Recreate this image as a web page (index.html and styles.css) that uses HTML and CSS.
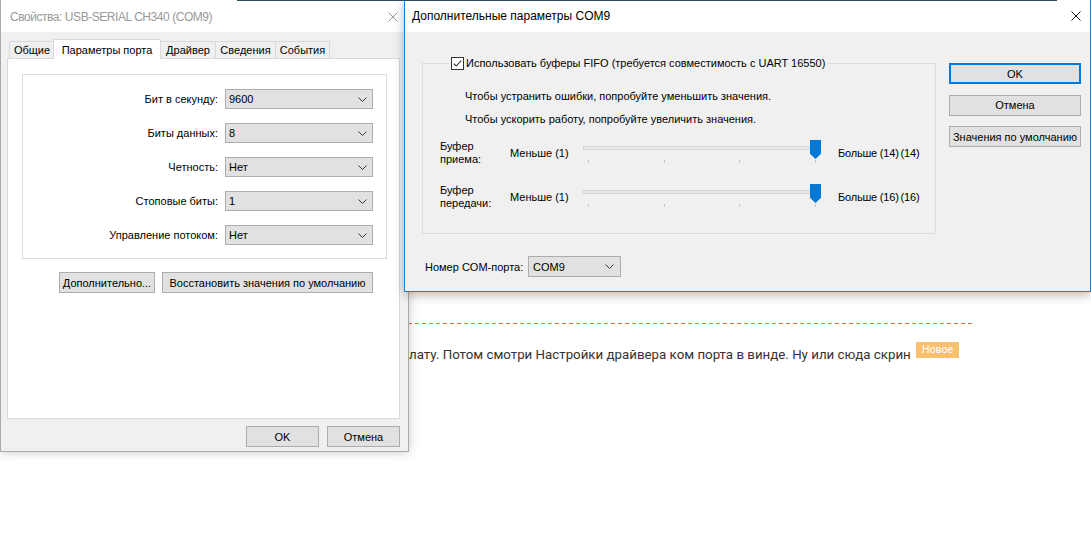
FILE: index.html
```html
<!DOCTYPE html>
<html lang="ru">
<head>
<meta charset="utf-8">
<title>COM9</title>
<link rel="stylesheet" href="styles.css">
</head>
<body>
<div class="desktop">
  <div class="page">
    <div class="dash"></div>
    <p class="post">лату. Потом смотри Настройки драйвера ком порта в винде. Ну или сюда скрин <span class="badge">Новое</span></p>
  </div>

  <div class="topstrip"></div>

  <section class="win props">
    <header class="titlebar inactive">
      <span class="title">Свойства: USB-SERIAL CH340 (COM9)</span>
      <svg class="close" width="10" height="10" viewBox="0 0 10 10"><path d="M0.5 0.5 L9.5 9.5 M9.5 0.5 L0.5 9.5" stroke="#9a9a9a" stroke-width="1" fill="none"/></svg>
    </header>
    <div class="props-body">
      <nav class="tabs">
        <span class="tab t1">Общие</span>
        <span class="tab t2 active">Параметры порта</span>
        <span class="tab t3">Драйвер</span>
        <span class="tab t4">Сведения</span>
        <span class="tab t5">События</span>
      </nav>
      <div class="panel">
        <div class="group">
          <div class="form">
            <label class="flabel">Бит в секунду:</label>
            <div class="select"><span>9600</span><svg class="chev" width="9" height="5" viewBox="0 0 9 5"><path d="M0.5 0.5 L4.5 4.5 L8.5 0.5" stroke="#333" fill="none"/></svg></div>
            <label class="flabel">Биты данных:</label>
            <div class="select"><span>8</span><svg class="chev" width="9" height="5" viewBox="0 0 9 5"><path d="M0.5 0.5 L4.5 4.5 L8.5 0.5" stroke="#333" fill="none"/></svg></div>
            <label class="flabel">Четность:</label>
            <div class="select"><span>Нет</span><svg class="chev" width="9" height="5" viewBox="0 0 9 5"><path d="M0.5 0.5 L4.5 4.5 L8.5 0.5" stroke="#333" fill="none"/></svg></div>
            <label class="flabel">Стоповые биты:</label>
            <div class="select"><span>1</span><svg class="chev" width="9" height="5" viewBox="0 0 9 5"><path d="M0.5 0.5 L4.5 4.5 L8.5 0.5" stroke="#333" fill="none"/></svg></div>
            <label class="flabel">Управление потоком:</label>
            <div class="select"><span>Нет</span><svg class="chev" width="9" height="5" viewBox="0 0 9 5"><path d="M0.5 0.5 L4.5 4.5 L8.5 0.5" stroke="#333" fill="none"/></svg></div>
          </div>
        </div>
        <div class="panel-actions">
          <button class="btn b-more">Дополнительно...</button>
          <button class="btn b-restore">Восстановить значения по умолчанию</button>
        </div>
      </div>
      <div class="footer">
        <button class="btn b-foot">OK</button>
        <button class="btn b-foot">Отмена</button>
      </div>
    </div>
  </section>

  <section class="win adv">
    <header class="titlebar">
      <span class="title">Дополнительные параметры COM9</span>
      <svg class="close" width="10" height="10" viewBox="0 0 10 10"><path d="M0.5 0.5 L9.5 9.5 M9.5 0.5 L0.5 9.5" stroke="#111" stroke-width="1" fill="none"/></svg>
    </header>
    <div class="adv-body">
      <div class="adv-main">
        <fieldset class="fifo">
          <legend class="fifo-legend">
            <svg class="checkbox" width="13" height="13" viewBox="0 0 13 13"><rect x="0.5" y="0.5" width="12" height="12" fill="#fff" stroke="#333"/><path d="M2.8 6.6 L5.2 9 L10.2 3.6" stroke="#333" stroke-width="1.1" fill="none"/></svg>
            <span>Использовать буферы FIFO (требуется совместимость с UART 16550)</span>
          </legend>
          <p class="hint h1">Чтобы устранить ошибки, попробуйте уменьшить значения.</p>
          <p class="hint h2">Чтобы ускорить работу, попробуйте увеличить значения.</p>
          <div class="srow r1">
            <div class="slabel">Буфер<br>приема:</div>
            <div class="smin">Меньше (1)</div>
            <div class="slider">
              <div class="track"></div>
              <div class="ticks"><i></i><i></i><i></i><i></i></div>
              <div class="thumb"></div>
            </div>
            <div class="smax"><span>Больше (14)</span><span class="cur">(14)</span></div>
          </div>
          <div class="srow r2">
            <div class="slabel">Буфер<br>передачи:</div>
            <div class="smin">Меньше (1)</div>
            <div class="slider">
              <div class="track"></div>
              <div class="ticks"><i></i><i></i><i></i><i></i></div>
              <div class="thumb"></div>
            </div>
            <div class="smax"><span>Больше (16)</span><span class="cur">(16)</span></div>
          </div>
        </fieldset>
        <div class="comrow">
          <span class="com-label">Номер COM-порта:</span>
          <div class="select com"><span>COM9</span><svg class="chev" width="9" height="5" viewBox="0 0 9 5"><path d="M0.5 0.5 L4.5 4.5 L8.5 0.5" stroke="#333" fill="none"/></svg></div>
        </div>
      </div>
      <div class="adv-side">
        <button class="btn side default">OK</button>
        <button class="btn side">Отмена</button>
        <button class="btn side">Значения по умолчанию</button>
      </div>
    </div>
  </section>
</div>
</body>
</html>
```

FILE: styles.css
```css
* { box-sizing: border-box; }
html, body { margin: 0; padding: 0; }
body {
  width: 1091px;
  height: 540px;
  overflow: hidden;
  background: #ffffff;
  font-family: "Liberation Sans", Arial, sans-serif;
  font-size: 11px;
  color: #000;
}
.desktop { position: relative; width: 1091px; height: 540px; }

/* background web page */
.page {
  position: absolute;
  left: 408px;
  top: 323px;
  width: 566px;
}
.dash {
  height: 1px;
  background: repeating-linear-gradient(to right, #e8752b 0 4px, transparent 4px 7px);
}
.post {
  margin: 18px 0 0 1px;
  font-family: Roboto, "Liberation Sans", sans-serif;
  font-size: 13.3px;
  line-height: 18px;
  color: #333;
  white-space: nowrap;
}
.badge {
  display: inline-block;
  margin-left: 2px;
  padding: 0 6px;
  height: 16px;
  line-height: 16px;
  background: #f9c06d;
  color: #fff;
  font-size: 10.5px;
  vertical-align: 6px;
}

.topstrip {
  position: absolute;
  left: 237px;
  top: 0;
  width: 820px;
  height: 1px;
  background: #2a4e5a;
  z-index: 5;
}

/* windows */
.win {
  position: absolute;
  top: 0;
  display: flex;
  flex-direction: column;
  background: #f0f0f0;
}
.titlebar {
  height: 32px;
  flex: none;
  background: #fff;
  display: flex;
  align-items: center;
  justify-content: space-between;
  font-size: 12px;
  color: #000;
}
.titlebar.inactive { color: #999; }
.titlebar.inactive .title { letter-spacing: -0.45px; }
.props .titlebar { padding: 1px 10px 0 9px; }
.adv .titlebar { padding: 0 9px 0 7px; }

.props {
  left: 0;
  width: 409px;
  height: 452px;
  border: 1px solid #a9a9a9;
  border-top: none;
  box-shadow: 0 0 10px rgba(0, 0, 0, 0.22);
}
.props-body {
  flex: 1;
  padding: 7px 8px 0 6px;
  display: flex;
  flex-direction: column;
}
.tabs {
  display: flex;
  align-items: flex-end;
  height: 19px;
  padding-left: 2px;
}
.tab {
  height: 17px;
  border: 1px solid #d9d9d9;
  border-bottom: none;
  margin-right: -1px;
  background: #f0f0f0;
  display: flex;
  align-items: center;
  justify-content: center;
  white-space: nowrap;
}
.tab.active {
  height: 20px;
  margin-bottom: -1px;
  margin-left: -1px;
  background: #fff;
  position: relative;
  z-index: 1;
}
.t1 { width: 46px; }
.t2 { width: 108px; }
.t3 { width: 56px; }
.t4 { width: 61px; }
.t5 { width: 55px; }

.panel {
  width: 393px;
  height: 361px;
  background: #fff;
  border: 1px solid #d9d9d9;
  padding: 15px 12px 0 14px;
}
.group {
  border: 1px solid #dcdcdc;
  padding: 14px 13px 13px 0;
}
.form {
  display: grid;
  grid-template-columns: 1fr 148px;
  column-gap: 7px;
  row-gap: 14px;
  align-items: center;
}
.flabel { text-align: right; white-space: nowrap; }
.select {
  height: 20px;
  background: #e1e1e1;
  border: 1px solid #adadad;
  display: flex;
  align-items: center;
  justify-content: space-between;
  padding: 0 5px 0 3px;
}
.chev { display: block; }

.panel-actions {
  display: flex;
  justify-content: flex-end;
  gap: 7px;
  margin-top: 13px;
  padding-right: 14px;
}
.btn {
  height: 21px;
  padding: 0;
  background: #e1e1e1;
  border: 1px solid #adadad;
  font-family: "Liberation Sans", Arial, sans-serif;
  font-size: 11px;
  color: #000;
  white-space: nowrap;
}
.b-more { width: 96px; }
.b-restore { width: 211px; }
.footer {
  display: flex;
  justify-content: flex-end;
  gap: 8px;
  margin-top: 7px;
}
.b-foot { width: 73px; }

/* advanced dialog */
.adv {
  left: 404px;
  width: 687px;
  height: 292px;
  border: 1px solid #1a7fd6;
  border-top: none;
  box-shadow: 0 3px 10px rgba(0, 0, 0, 0.28);
  z-index: 2;
}
.adv-body {
  flex: 1;
  display: flex;
  padding: 24px 9px 0 17px;
}
.adv-main { width: 514px; }
.fifo {
  margin: 0;
  padding: 0 0 23px 0;
  border: 1px solid #dcdcdc;
  min-width: 0;
}
.fifo-legend {
  margin-left: 26px;
  padding: 0 3px 0 2px;
  height: 14px;
  display: flex;
  align-items: center;
  gap: 2px;
  white-space: nowrap;
}
.checkbox { display: block; }
.hint {
  margin: 0 0 0 42px;
  line-height: 13px;
  white-space: nowrap;
}
.h1 { margin-top: 20px; }
.h2 { margin-top: 10px; }

.srow {
  display: flex;
  align-items: center;
  height: 26px;
  margin-left: 17px;
}
.r1 { margin-top: 14px; }
.r2 { margin-top: 18px; }
.slabel { width: 70px; line-height: 13px; }
.smin { width: 73px; }
.smax { margin-left: 17px; white-space: nowrap; display: flex; gap: 2px; letter-spacing: -0.2px; }
.slider {
  position: relative;
  width: 238px;
  height: 26px;
}
.track {
  margin: 6px 1px 0 0;
  height: 4px;
  background: #e7e7e7;
  border: 1px solid #d6d6d6;
}
.ticks {
  display: flex;
  justify-content: space-between;
  margin-top: 10px;
  padding: 0 5px;
  height: 3px;
}
.ticks i {
  display: block;
  width: 1px;
  height: 3px;
  background: #c4c4c4;
}
.thumb {
  position: absolute;
  right: 0;
  top: 0;
  width: 11px;
  height: 19px;
  background: #0078d7;
  clip-path: polygon(0 0, 100% 0, 100% 72%, 50% 100%, 0 72%);
}

.comrow {
  display: flex;
  align-items: center;
  margin-top: 22px;
  padding-left: 3px;
}
.com-label { width: 103px; white-space: nowrap; }
.select.com { width: 93px; height: 21px; padding: 0 6px 0 4px; }

.adv-side {
  margin-left: 13px;
  margin-top: 7px;
  display: flex;
  flex-direction: column;
  gap: 10.5px;
}
.side { width: 132px; }
.side.default { border: 2px solid #0078d7; }
```
